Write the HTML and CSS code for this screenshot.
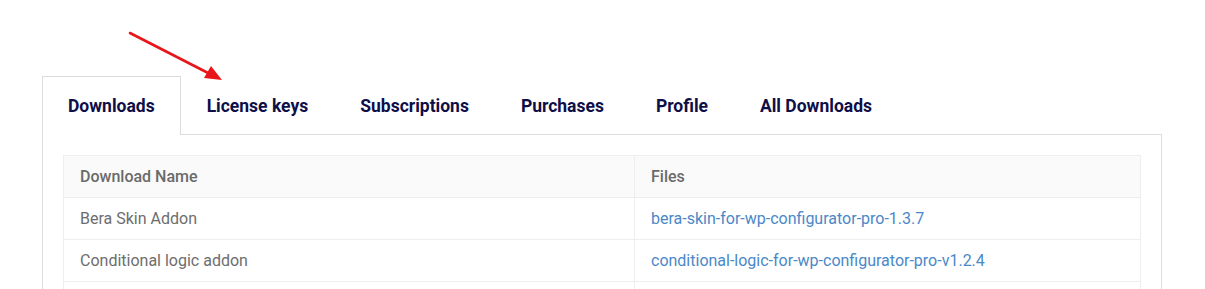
FILE: index.html
```html
<!DOCTYPE html>
<html lang="en">
<head>
  <meta charset="UTF-8">
  <title>Account</title>
  <link rel="stylesheet" href="styles.css">
</head>
<body>

  <div class="account">
    <svg class="pointer" width="110" height="60" viewBox="0 0 110 60">
      <line x1="10" y1="8" x2="92" y2="50" stroke="#e8161b" stroke-width="2.6" stroke-linecap="round"/>
      <polygon points="102,55 84,53 91,41" fill="#e8161b"/>
    </svg>

    <ul class="tabs">
      <li class="tab active">Downloads</li>
      <li class="tab">License keys</li>
      <li class="tab">Subscriptions</li>
      <li class="tab">Purchases</li>
      <li class="tab">Profile</li>
      <li class="tab">All Downloads</li>
    </ul>

    <div class="panel">
      <table class="downloads">
        <thead>
          <tr>
            <th class="name-col">Download Name</th>
            <th>Files</th>
          </tr>
        </thead>
        <tbody>
          <tr>
            <td>Bera Skin Addon</td>
            <td><a href="#">bera-skin-for-wp-configurator-pro-1.3.7</a></td>
          </tr>
          <tr>
            <td>Conditional logic addon</td>
            <td><a href="#">conditional-logic-for-wp-configurator-pro-v1.2.4</a></td>
          </tr>
          <tr>
            <td>&nbsp;</td>
            <td>&nbsp;</td>
          </tr>
        </tbody>
      </table>
    </div>
  </div>

</body>
</html>
```

FILE: styles.css
```css
body {
  margin: 0;
  font-family: Roboto, "Liberation Sans", sans-serif;
  background: #fff;
}

.account {
  position: relative;
  width: 1120px;
  margin: 76px 0 0 42px;
}

.pointer {
  position: absolute;
  left: 78px;
  top: -51px;
}

.tabs {
  display: flex;
  list-style: none;
  margin: 0;
  padding: 0;
}

.tab {
  padding: 1px 25px 0;
  height: 56px;
  line-height: 57px;
  font-size: 17.5px;
  font-weight: 700;
  color: #0e0e48;
  border: 1px solid transparent;
  border-bottom: none;
  cursor: pointer;
}

.tab.active {
  border-color: #dcdcdc;
  background: #fff;
  margin-bottom: -1px;
  height: 57px;
  position: relative;
}

.panel {
  border: 1px solid #dcdcdc;
  padding: 20px;
}

.downloads {
  width: 100%;
  border-collapse: collapse;
  font-size: 16px;
  color: #6d6d6d;
}

.downloads th,
.downloads td {
  border: 1px solid #eeeeee;
  padding: 10px 16px;
  line-height: 21px;
  text-align: left;
}

.downloads th {
  background: #fafafa;
  font-weight: 500;
  color: #6a6a6a;
}

.name-col {
  width: 538px;
}

.downloads a {
  color: #4b88c7;
  text-decoration: none;
}
```
